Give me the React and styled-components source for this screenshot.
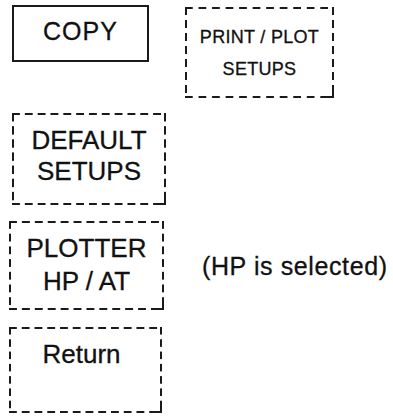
import React from 'react'
import styled, { css, createGlobalStyle } from 'styled-components'

const GlobalStyle = createGlobalStyle`
  html, body {
    margin: 0;
    padding: 0;
    background: #fff;
  }
  body {
    font-family: "Liberation Sans", Arial, Helvetica, sans-serif;
    color: #111;
  }
`

const ink = '#1a1a1a'

// long dashes like the scanned manual, drawn with gradients instead of border-style
const dashed = css`
  background:
    linear-gradient(90deg, ${ink} 8px, transparent 8px) top left / 13px 2px,
    linear-gradient(90deg, ${ink} 8px, transparent 8px) bottom left / 13px 2px,
    linear-gradient(180deg, ${ink} 8px, transparent 8px) top left / 2px 13px,
    linear-gradient(180deg, ${ink} 8px, transparent 8px) top right / 2px 13px,
    linear-gradient(${ink}, ${ink}) bottom right / 6px 2px,
    linear-gradient(${ink}, ${ink}) bottom right / 2px 6px;
  background-repeat: round no-repeat, round no-repeat, no-repeat round, no-repeat round, no-repeat, no-repeat;
  padding: 2px;
`

const Page = styled.div`
  width: 393px;
  height: 417px;
  box-sizing: border-box;
  padding-top: 5px;
  display: flex;
  flex-direction: column;
`

const Row = styled.div`
  display: flex;
  align-items: ${p => p.$align || 'flex-start'};
  margin-top: ${p => p.$top || 0}px;
  padding-left: ${p => p.$indent || 0}px;
`

const Key = styled.div`
  box-sizing: border-box;
  width: ${p => p.$w}px;
  height: ${p => p.$h}px;
  margin-top: ${p => p.$offset || 0}px;
  margin-left: ${p => p.$left || 0}px;
  ${p => (p.$solid ? `border: 2px solid ${ink};` : dashed)}
  display: flex;
  flex-direction: column;
  align-items: center;
  justify-content: ${p => (p.$top ? 'flex-start' : 'center')};
  text-align: center;
  font-size: ${p => p.$size || 26}px;
  line-height: ${p => p.$lh || 31}px;
  letter-spacing: ${p => p.$ls || 0}px;
  -webkit-text-stroke: 0.3px #111;
  white-space: nowrap;
`

const Pad = styled.div`
  display: flex;
  flex-direction: column;
  align-items: center;
  padding: ${p => p.$pad || '0'};
`

const Note = styled.span`
  margin-left: ${p => p.$left}px;
  font-size: 25px;
  letter-spacing: 0.6px;
  line-height: 30px;
  -webkit-text-stroke: 0.3px #111;
  white-space: nowrap;
`

export default function App() {
  return (
    <>
      <GlobalStyle />
      <Page>
        <Row $indent={12}>
          <Key $solid $w={137} $h={57} $size={25} $ls={1}>
            <Pad $pad="0 0 4px 0">COPY</Pad>
          </Key>
          <Key $w={149} $h={91} $left={36} $offset={2} $size={18} $lh={32} $ls={0.3}>
            <Pad>
              <span>PRINT / PLOT</span>
              <span>SETUPS</span>
            </Pad>
          </Key>
        </Row>

        <Row $indent={12} $top={15}>
          <Key $w={154} $h={92}>
            <Pad $pad="0 0 6px 0">
              <span>DEFAULT</span>
              <span>SETUPS</span>
            </Pad>
          </Key>
        </Row>

        <Row $indent={9} $top={16} $align="center">
          <Key $w={155} $h={89} $lh={33}>
            <Pad $pad="0 0 2px 0">
              <span>PLOTTER</span>
              <span>HP / AT</span>
            </Pad>
          </Key>
          <Note $left={38}>(HP is selected)</Note>
        </Row>

        <Row $indent={9} $top={17}>
          <Key $top $w={153} $h={86} $lh={30}>
            <Pad $pad="10px 8px 0 0">Return</Pad>
          </Key>
        </Row>
      </Page>
    </>
  )
}
